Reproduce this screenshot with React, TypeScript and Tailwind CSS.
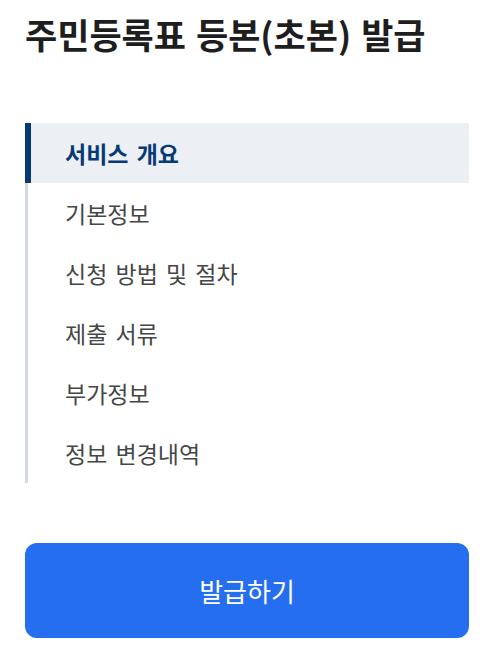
const FONT = "font-['Noto_Sans_CJK_KR','Noto_Sans',sans-serif]"

const ITEMS = ["서비스 개요", "기본정보", "신청 방법 및 절차", "제출 서류", "부가정보", "정보 변경내역"]

export default function App() {
  const active = 0
  return (
    <div className={`${FONT} bg-white min-h-screen pl-[25px] pr-[22px] pt-[12px] pb-[17px]`}>
      <h1 className="text-[35px] leading-[44px] font-bold text-[#1e1e1e] [word-spacing:2px]">
        주민등록표 등본(초본) 발급
      </h1>

      <nav className="mt-[67px] border-l-[3px] border-[#d2d9e3] [word-spacing:3px]">
        {ITEMS.map((item, i) => (
          <div
            key={item}
            className={
              i === active
                ? "-ml-[3px] h-[60px] flex items-center pl-[34px] bg-[#eceff4] border-l-[6px] border-[#063a74] text-[23px] font-bold text-[#063a74]"
                : "h-[60px] flex items-center pl-[37px] text-[23px] text-[#464646]"
            }
          >
            {item}
          </div>
        ))}
      </nav>

      <button className="mt-[60px] w-full h-[95px] rounded-[12px] bg-[#256ef0] text-white text-[26px] flex items-center justify-center">
        발급하기
      </button>
    </div>
  )
}
